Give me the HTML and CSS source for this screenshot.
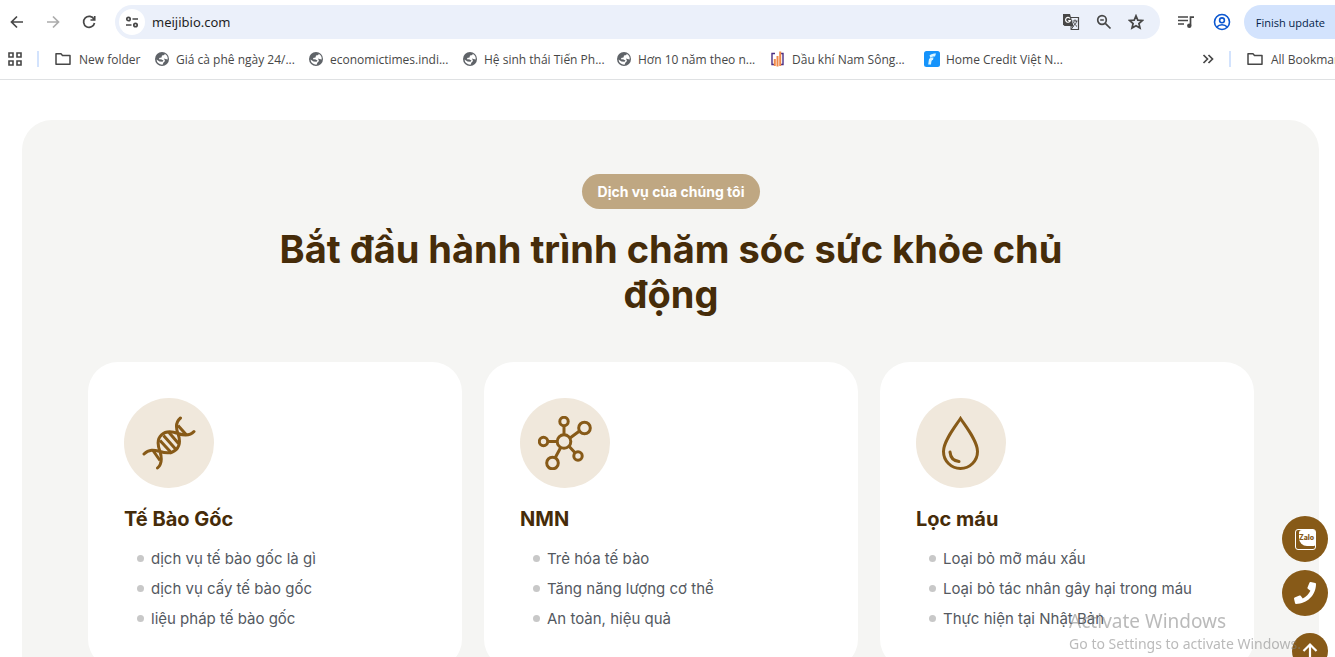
FILE: index.html
```html
<!DOCTYPE html>
<html lang="vi">
<head>
  <meta charset="UTF-8">
  <meta name="viewport" content="width=device-width, initial-scale=1.0">
  <title>meijibio.com</title>
  <link rel="stylesheet" href="styles.css">
</head>
<body>
  <!-- shared symbols -->
  <svg class="symbols" aria-hidden="true">
    <symbol id="globe" viewBox="0 0 16 16">
      <circle cx="8" cy="8" r="7" fill="#5f6368"/>
      <path d="M2.500 8.500 5.500 10.500 8.500 10.800 9.500 9.500 7 8.300 5.500 8.500 5 7 7.500 6.500 8 4.500 10.500 4 10.500 2.800A5.800 5.800 0 0 1 13.700 8.500L11.500 8 10 7.500 11 10 9.500 11.500 8.500 13.800A5.800 5.800 0 0 1 2.500 8.500z" fill="#fff"/>
    </symbol>
    <symbol id="folder" viewBox="0 0 16 16">
      <path d="M1 2.800h5l1.500 1.700H15v8.700H1z" fill="none" stroke="#474747" stroke-width="1.500" stroke-linejoin="round"/>
    </symbol>
  </svg>

  <header class="browser">
    <div class="toolbar">
      <div class="nav">
        <button aria-label="Back"><svg width="16" height="16" viewBox="0 0 16 16"><path d="M14 8H3M8 2.500 2.500 8 8 13.500" class="line"/></svg></button>
        <button aria-label="Forward" class="off"><svg width="16" height="16" viewBox="0 0 16 16"><path d="M2 8h11M8 2.500 13.500 8 8 13.500" class="line"/></svg></button>
        <button aria-label="Reload"><svg width="16" height="16" viewBox="0 0 16 16"><path d="M13 5.300A5.500 5.500 0 1 0 13.500 9M13.700 2v4H9.500" class="line"/></svg></button>
      </div>
      <div class="omnibox">
        <button class="site-info" aria-label="Site information">
          <svg width="14" height="14" viewBox="0 0 14 14"><g class="line"><circle cx="3.500" cy="4" r="1.700"/><path d="M7.500 4H13M1 10h5.500"/><circle cx="10.500" cy="10" r="1.700"/></g></svg>
        </button>
        <input type="text" value="meijibio.com" aria-label="Address">
        <button aria-label="Translate">
          <svg width="18" height="18" viewBox="0 0 18 18"><path d="M8 4.500h8.500v12H9" fill="none" stroke="#474747" stroke-width="1.200"/><path d="M1 1h7l3.500 12H2.500L1 11.500z" fill="#474747"/><path d="M8 5.500A2.400 2.400 0 1 0 8.300 7.500H6.200" fill="none" stroke="#fff" stroke-width="1.200"/><path d="M10.500 8h5M13 6.500V8M14.700 8c-.5 2.300-1.700 3.800-3.200 4.800M11.500 9c.8 2 2 3.300 3.500 4.500M9 13v3.500l2.500-3.500z" fill="none" stroke="#474747"/></svg>
        </button>
        <button aria-label="Zoom">
          <svg width="16" height="16" viewBox="0 0 16 16"><g class="line"><circle cx="6" cy="6" r="4.300"/><path d="m9.300 9.300 5.200 5.200M4.200 6h3.600"/></g></svg>
        </button>
        <button aria-label="Bookmark this page">
          <svg width="16" height="16" viewBox="0 0 16 16"><path d="m8 1.800 1.800 4.300 4.600.4-3.500 3 1.100 4.600L8 11.700l-4 2.400 1.100-4.600-3.500-3 4.600-.4z" class="line"/></svg>
        </button>
      </div>
      <button class="tool" aria-label="Media controls">
        <svg width="16" height="16" viewBox="0 0 16 16"><path d="M0 3h10M0 6.500h10M0 10h6" class="line"/><path d="M12.500 11.500V3.200H16" class="line"/><circle cx="11.300" cy="11.700" r="2.200" fill="#474747"/></svg>
      </button>
      <button class="tool" aria-label="Profile">
        <svg width="18" height="18" viewBox="0 0 18 18" fill="none" stroke="#0b57d0" stroke-width="1.600"><circle cx="9" cy="9" r="7.500"/><circle cx="9" cy="7.300" r="2.400"/><path d="M3.800 14c1.300-1.500 3.100-2.300 5.200-2.300s3.900.8 5.200 2.300"/></svg>
      </button>
      <button class="update">Finish update</button>
    </div>

    <nav class="bookmarks">
      <button class="apps" aria-label="Apps">
        <svg width="14" height="14" viewBox="0 0 14 14" fill="none" stroke="#474747" stroke-width="1.600"><path d="M1 1h4v4H1zM9 1h4v4H9zM1 9h4v4H1zM9 9h4v4H9z"/></svg>
      </button>
      <span class="divider"></span>
      <a href="#" class="folder"><svg width="16" height="16"><use href="#folder"/></svg>New folder</a>
      <a href="#" class="mark"><svg width="16" height="16"><use href="#globe"/></svg>Giá cà phê ngày 24/...</a>
      <a href="#" class="mark"><svg width="16" height="16"><use href="#globe"/></svg>economictimes.indi...</a>
      <a href="#" class="mark"><svg width="16" height="16"><use href="#globe"/></svg>Hệ sinh thái Tiến Ph...</a>
      <a href="#" class="mark"><svg width="16" height="16"><use href="#globe"/></svg>Hơn 10 năm theo n...</a>
      <a href="#" class="mark"><svg width="16" height="16" viewBox="0 0 16 16" fill="none"><path d="M5 2.500H2v11h2M10.500 2.500h2.500v11h-2" stroke="#4b2e83" stroke-width="1.400"/><path d="M4.800 15V8M7.500 15.500V5M10.200 15V.5" stroke="#f0894a" stroke-width="2"/></svg>Dầu khí Nam Sông...</a>
      <a href="#" class="mark"><svg width="16" height="16" viewBox="0 0 16 16"><rect width="16" height="16" rx="2.500" fill="#1593fb"/><path d="M5.500 4.500c1.500-1.500 4-2 6.500-2L11 5.500c-2 0-3.500.3-4.500 1.500zM5 8c1.300-1.200 2.800-1.500 4.500-1.500L9 9c-1.500 0-1.500 1-2 4.500H4.200z" fill="#d9f4ff"/></svg>Home Credit Việt N...</a>
      <button class="more" aria-label="More bookmarks">
        <svg width="12" height="12" viewBox="0 0 12 12"><path d="m1.500 2 4 4-4 4M6.500 2l4 4-4 4" class="line"/></svg>
      </button>
      <span class="divider"></span>
      <a href="#" class="all"><svg width="16" height="16"><use href="#folder"/></svg>All Bookmarks</a>
    </nav>
  </header>

  <main>
    <section class="services">
      <span class="badge">Dịch vụ của chúng tôi</span>
      <h1>Bắt đầu hành trình chăm sóc sức khỏe chủ động</h1>
      <div class="cards">
        <article class="card">
          <div class="icon">
            <svg width="54" height="54" viewBox="0 0 54 54"><path stroke-linecap="round" d="M2 38C7 33 12 34 18 35.500 32 40 41 32 36 17.500 33 10 35 5 38.500 2M15.500 52C20 48 20 42 18 35.500 12 20 22 12.500 36 17.500 43 20 48 20 52 15.500"/><path d="M11 34.500l7 10M18 24.500l12 13M21.500 19.500l12.500 14M27 16.500l9.500 11M36 9.500l8.500 9.500"/></svg>
          </div>
          <h2>Tế Bào Gốc</h2>
          <ul>
            <li>dịch vụ tế bào gốc là gì</li>
            <li>dịch vụ cấy tế bào gốc</li>
            <li>liệu pháp tế bào gốc</li>
          </ul>
        </article>
        <article class="card">
          <div class="icon">
            <svg width="54" height="54" viewBox="0 0 54 54"><circle cx="26" cy="25.500" r="6.800"/><circle cx="26" cy="5.500" r="4.200"/><circle cx="46.500" cy="12" r="5.800"/><circle cx="5.500" cy="25.500" r="4.200"/><circle cx="14.500" cy="47" r="5.800"/><circle cx="40" cy="40" r="4.200"/><path d="M26 9.700v9M32 22l9.500-7M9.700 25.500h9.500M22.700 31.500l-5.500 10.300M31 30.300l6 6.500"/></svg>
          </div>
          <h2>NMN</h2>
          <ul>
            <li>Trẻ hóa tế bào</li>
            <li>Tăng năng lượng cơ thể</li>
            <li>An toàn, hiệu quả</li>
          </ul>
        </article>
        <article class="card">
          <div class="icon">
            <svg width="54" height="54" viewBox="0 0 54 54"><path d="M26.500 2.500C21 11 9.500 25 9.500 35.500a17 17 0 0 0 34 0C43.500 25 32 11 26.500 2.500z"/><path stroke-linecap="round" d="M16 36c.5 5.500 4 9 9 9.500"/></svg>
          </div>
          <h2>Lọc máu</h2>
          <ul>
            <li>Loại bỏ mỡ máu xấu</li>
            <li>Loại bỏ tác nhân gây hại trong máu</li>
            <li>Thực hiện tại Nhật Bản</li>
          </ul>
        </article>
      </div>
    </section>
  </main>

  <div class="contact">
    <a href="#" aria-label="Zalo"><span class="zalo"><span>Zalo</span></span></a>
    <a href="#" aria-label="Phone"><svg width="22" height="22" viewBox="0 0 512 512"><path fill="#fff" d="M493.400 24.600l-104-24c-11.300-2.600-22.900 3.300-27.500 13.900l-48 112c-4.200 9.800-1.400 21.300 6.900 28l60.600 49.600c-36 76.700-98.900 140.500-177.200 177.200l-49.600-60.600c-6.800-8.300-18.200-11.100-28-6.900l-112 48C3.900 366.500-2 378.100.6 389.400l24 104C27.100 504.200 36.700 512 48 512c256.100 0 464-207.500 464-464 0-11.200-7.700-20.900-18.600-23.400z"/></svg></a>
    <button class="top" aria-label="Back to top"><svg width="18" height="18" viewBox="0 0 18 18"><path d="M9 17V3M2.500 9 9 2.500 15.500 9" fill="none" stroke="#fff" stroke-width="2.200"/></svg></button>
  </div>

  <div class="watermark">
    <p class="watermark-title">Activate Windows</p>
    <p>Go to Settings to activate Windows.</p>
  </div>
</body>
</html>
```
FILE: styles.css
```css
* {
  box-sizing: border-box;
  margin: 0;
  padding: 0;
}
body {
  height: 100vh;
  display: flex;
  flex-direction: column;
  overflow: hidden;
  background: #fff;
  font-family: Inter, sans-serif;
}
button {
  border: none;
  background: none;
  cursor: pointer;
}
button, .icon, .contact a {
  display: flex;
  align-items: center;
  justify-content: center;
}
a {
  color: inherit;
  text-decoration: none;
}
svg {
  flex: none;
}
.symbols {
  position: absolute;
  width: 0;
  height: 0;
}
.line {
  fill: none;
  stroke: #474747;
  stroke-width: 1.7;
}

/* browser bars */
.browser {
  flex: none;
  border-bottom: 1px solid #dfe1e3;
  font-family: "Open Sans", sans-serif;
  font-size: 12px;
  color: #474747;
}
.toolbar {
  display: flex;
  align-items: center;
  height: 44px;
}
.nav {
  display: flex;
  gap: 20px;
  padding: 0 18px 0 9px;
}
.off {
  opacity: 0.45;
}
.omnibox {
  flex: 1;
  display: flex;
  align-items: center;
  gap: 16px;
  height: 34px;
  padding: 0 16px 0 4px;
  border-radius: 17px;
  background: #ebf0fa;
}
.site-info {
  width: 26px;
  height: 26px;
  border-radius: 50%;
  background: #fff;
}
.omnibox input {
  flex: 1;
  margin-left: -9px;
  border: none;
  outline: none;
  background: none;
  font-family: "Noto Sans", sans-serif;
  font-size: 13px;
  color: #1f1f1f;
}
.tool {
  width: 36px;
  height: 36px;
}
.omnibox + .tool {
  margin-left: 8px;
}
.update {
  height: 34px;
  margin-left: 4px;
  padding: 0 10px 0 12px;
  border-radius: 17px 0 0 17px;
  background: #d3e3fd;
  font-family: "Open Sans", sans-serif;
  font-size: 11px;
  color: #041e49;
  white-space: nowrap;
}
.bookmarks {
  display: flex;
  align-items: center;
  height: 30px;
  margin-bottom: 5px;
  padding-left: 8px;
  white-space: nowrap;
}
.bookmarks a {
  flex: none;
  display: flex;
  align-items: center;
  gap: 8px;
  overflow: hidden;
}
.divider {
  flex: none;
  width: 2px;
  height: 16px;
  margin: 0 16px 0 15px;
  background: #d3e3fd;
}
.bookmarks .folder {
  width: 99px;
}
.bookmarks .mark {
  gap: 6px;
  width: 154px;
}
.bookmarks .more {
  margin-left: auto;
}
.bookmarks .all {
  width: 88px;
}

/* services */
main {
  flex: 1;
  min-height: 0;
  padding: 40px 16px 0 22px;
}
.services {
  display: flex;
  flex-direction: column;
  align-items: center;
  padding: 54px 65px 54px 66px;
  border-radius: 30px;
  background: #f5f5f3;
}
.badge {
  padding: 0 16px;
  border-radius: 18px;
  background: #bfa782;
  font-size: 14px;
  font-weight: 700;
  line-height: 35px;
  color: #fff;
}
h1 {
  max-width: 800px;
  margin: 18px 0 45px;
  font-size: 38px;
  font-weight: 700;
  line-height: 45px;
  text-align: center;
  color: #462c09;
}
.cards {
  align-self: stretch;
  display: grid;
  grid-template-columns: repeat(3, 1fr);
  gap: 22px;
}
.card {
  padding: 36px;
  border-radius: 30px;
  background: #fff;
}
.icon {
  width: 90px;
  height: 90px;
  border-radius: 50%;
  background: #f0e8dc;
}
.icon svg {
  fill: none;
  stroke: #875a18;
  stroke-width: 3;
}
h2 {
  margin: 16px 0 9px;
  font-size: 20px;
  font-weight: 700;
  line-height: 30px;
  color: #462c09;
}
ul {
  list-style: none;
}
li {
  display: flex;
  align-items: center;
  gap: 7px;
  height: 30px;
  padding-left: 13px;
  font-size: 15px;
  color: #54595f;
  white-space: nowrap;
}
li::before {
  content: "";
  width: 7px;
  height: 7px;
  border-radius: 50%;
  background: #c8c8c8;
}

/* floating buttons */
.contact {
  position: fixed;
  right: 7px;
  bottom: -12px;
  display: flex;
  flex-direction: column;
  align-items: flex-end;
  gap: 8px;
}
.contact a {
  width: 46px;
  height: 46px;
  border-radius: 50%;
  background: #875a18;
}
.contact .top {
  width: 36px;
  height: 36px;
  margin-top: 9px;
  border-radius: 50%;
  background: #875a18;
}
.zalo {
  width: 21px;
  height: 21px;
  padding: 0 0 3px 3px;
  border: 1px solid #fff;
  border-radius: 3px;
}
.zalo span {
  display: block;
  height: 16px;
  border-radius: 3px 1px 1px 8px;
  background: #fff;
  font-size: 7px;
  font-weight: 800;
  line-height: 15px;
  text-align: center;
  color: #875a18;
}
.watermark {
  position: fixed;
  right: 34px;
  bottom: 3px;
  font-family: "Noto Sans", sans-serif;
  font-size: 14px;
  line-height: 20px;
  color: rgba(130, 130, 130, 0.55);
  pointer-events: none;
}
.watermark-title {
  font-size: 19px;
  line-height: 26px;
}
```
